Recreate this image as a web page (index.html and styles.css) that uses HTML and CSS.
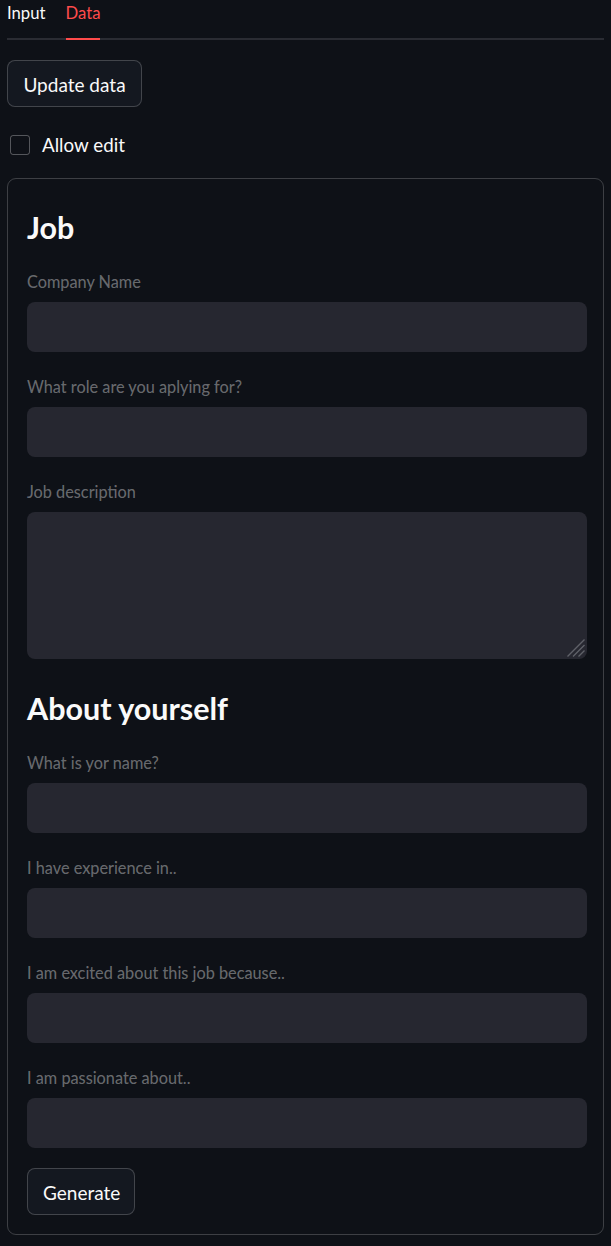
FILE: index.html
```html
<!DOCTYPE html>
<html lang="en">
<head>
<meta charset="utf-8">
<title>Cover letter</title>
<link rel="stylesheet" href="styles.css">
</head>
<body>
<div class="page">
  <div class="tabs">
    <div class="tab">Input</div>
    <div class="tab active">Data</div>
  </div>

  <button class="btn btn-update">Update data</button>

  <label class="check-row">
    <span class="checkbox"></span>
    <span class="check-label">Allow edit</span>
  </label>

  <form class="form-box">
    <h2 class="heading">Job</h2>
    <div class="field">
      <div class="label">Company Name</div>
      <input class="input" type="text" disabled>
    </div>
    <div class="field">
      <div class="label">What role are you aplying for?</div>
      <input class="input" type="text" disabled>
    </div>
    <div class="field">
      <div class="label">Job description</div>
      <div class="textarea-wrap">
        <textarea class="textarea" disabled></textarea>
        <svg class="grip" width="18" height="18" viewBox="0 0 18 18" aria-hidden="true">
          <path d="M0.5 17.5 L17.5 0.5 M6 17.5 L17.5 6 M11.5 17.5 L17.5 11.5" stroke="#5f6168" stroke-width="1.4" fill="none"/>
        </svg>
      </div>
    </div>

    <h2 class="heading heading-2">About yourself</h2>
    <div class="field">
      <div class="label">What is yor name?</div>
      <input class="input" type="text" disabled>
    </div>
    <div class="field">
      <div class="label">I have experience in..</div>
      <input class="input" type="text" disabled>
    </div>
    <div class="field">
      <div class="label">I am excited about this job because..</div>
      <input class="input" type="text" disabled>
    </div>
    <div class="field">
      <div class="label">I am passionate about..</div>
      <input class="input" type="text" disabled>
    </div>

    <button class="btn btn-generate" type="button">Generate</button>
  </form>
</div>
</body>
</html>
```

FILE: styles.css
```css
* { box-sizing: border-box; }

html, body {
  margin: 0;
  padding: 0;
  background: #0e1117;
  color: #fafafa;
  font-family: Lato, "Open Sans", sans-serif;
  color-scheme: dark;
}

.page {
  padding: 0 7px;
}

.tabs {
  display: flex;
  gap: 20px;
  height: 40px;
  border-bottom: 2px solid #2a2c33;
}

.tab {
  font-size: 16.7px;
  line-height: 27px;
  color: #fafafa;
  position: relative;
  height: 38px;
}

.tab.active {
  color: #ff4b4b;
}

.tab.active::after {
  content: "";
  position: absolute;
  left: 0;
  right: 0;
  bottom: -2px;
  height: 2px;
  background: #ff4b4b;
}

.btn {
  display: block;
  background: #141820;
  color: #fafafa;
  border: 1px solid rgba(250, 250, 250, 0.2);
  border-radius: 8px;
  font-family: inherit;
  font-size: 19px;
  height: 47px;
  padding: 2px 15px 0;
  cursor: pointer;
}

.btn-update {
  margin-top: 20px;
  width: 135px;
}

.check-row {
  display: flex;
  align-items: center;
  gap: 12px;
  margin: 28px 0 0 3px;
  height: 20px;
}

.checkbox {
  width: 20px;
  height: 20px;
  border: 1px solid rgba(250, 250, 250, 0.3);
  border-radius: 3px;
}

.check-label {
  font-size: 18.8px;
  line-height: 20px;
}

.form-box {
  margin-top: 23px;
  border: 1px solid rgba(250, 250, 250, 0.2);
  border-radius: 9px;
  padding: 28px 16px 19px 19px;
  display: flex;
  flex-direction: column;
  align-items: stretch;
}

.heading {
  margin: 0;
  font-size: 30.5px;
  font-weight: 700;
  line-height: 40px;
  color: #fafafa;
}

.heading-2 {
  margin-top: 29px;
}

.field {
  display: flex;
  flex-direction: column;
  gap: 10px;
  margin-top: 25px;
}

.label {
  font-size: 16.3px;
  line-height: 20px;
  color: rgba(250, 250, 250, 0.4);
}

.input,
.textarea {
  display: block;
  width: 100%;
  background: #262730;
  border: none;
  border-radius: 8px;
  font-family: inherit;
  color: #fafafa;
  outline: none;
}

.input {
  height: 50px;
}

.textarea-wrap {
  position: relative;
}

.textarea {
  height: 147px;
  resize: none;
}

.grip {
  position: absolute;
  right: 2px;
  bottom: 2px;
  display: block;
}

.btn-generate {
  margin-top: 20px;
  width: 108px;
  align-self: flex-start;
}
```
